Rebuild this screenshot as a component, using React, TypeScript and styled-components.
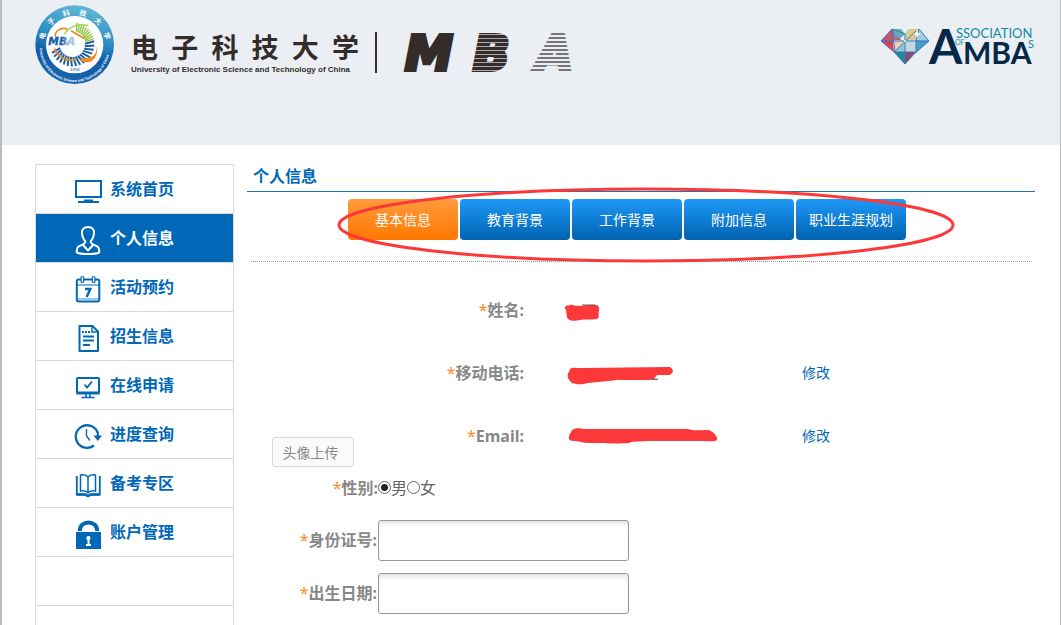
import React from 'react';
import styled, { createGlobalStyle, css } from 'styled-components';

const BLUE = '#0068b7';
const INK = '#342c2a';
const MARK = '#fd3838';

const GlobalStyle = createGlobalStyle`
  *, *::before, *::after { box-sizing: border-box; }
  body {
    margin: 0;
    background: #fff;
    color: #666;
    font-family: "Noto Sans", "Noto Sans CJK SC", sans-serif;
    font-size: 16px;
    line-height: 24px;
  }
`;

const Page = styled.div`
  display: flex;
  flex-direction: column;
  min-height: 100vh;
  border-left: 2px solid #bdbdbd;
  border-right: 1px solid #bdbdbd;
`;

/* ---------- header ---------- */

const Header = styled.header`
  display: flex;
  align-items: flex-start;
  justify-content: space-between;
  height: 145px;
  padding: 5px 24px 0 33px;
  background: #ebeff4;
`;

const Brand = styled.div`
  display: flex;
  align-items: flex-start;
`;

const University = styled.div`
  width: 228px;
  margin: 25px 0 0 16px;
  color: ${INK};
`;

const UniversityName = styled.div`
  display: flex;
  justify-content: space-between;
  font: 700 27px/34px "Noto Sans CJK SC", sans-serif;
`;

const UniversityEnglish = styled.div`
  font: 700 8px/12px "Liberation Sans", sans-serif;
  white-space: nowrap;
`;

const Divider = styled.span`
  width: 2px;
  height: 41px;
  margin: 27px 16px 0;
  background: ${INK};
`;

const MbaMark = styled.svg`
  display: block;
  margin-top: 12px;
`;

const AmbaMark = styled.svg`
  display: block;
  margin-top: 20px;
  overflow: visible;
`;

function ticks(from: number, to: number, step: number, inner: number, outer: number) {
  const lines: string[] = [];
  for (let a = from; a <= to; a += step) {
    const r = (a * Math.PI) / 180;
    const q = ((a + 6) * Math.PI) / 180;
    lines.push(
      `M${(112 + inner * Math.cos(q)).toFixed(1)} ${(118 + inner * Math.sin(q)).toFixed(1)}` +
        `L${(112 + outer * Math.cos(r)).toFixed(1)} ${(118 + outer * Math.sin(r)).toFixed(1)}`,
    );
  }
  return lines.join('');
}

function Seal() {
  return (
    <svg width="80" height="80" viewBox="0 0 240 240" role="img" aria-label="UESTC MBA">
      <defs>
        <linearGradient id="ring" x1="0.6" y1="0" x2="0.4" y2="1">
          <stop offset="0" stopColor="#62b8d6" />
          <stop offset="0.4" stopColor="#2f8fc4" />
          <stop offset="0.65" stopColor="#0f5ba8" />
          <stop offset="1" stopColor="#1a66b0" />
        </linearGradient>
        <linearGradient id="sealMba" x1="0" x2="1">
          <stop offset="0.5" stopColor="#1761ab" />
          <stop offset="0.8" stopColor="#a9c6e2" />
        </linearGradient>
        <path id="sealTop" d="M27 108 A93 93 0 0 1 211 108" />
        <path id="sealBottom" d="M14 126 A105 105 0 0 0 224 126" />
      </defs>
      <circle cx="119" cy="119" r="118" fill="url(#ring)" />
      <circle cx="119" cy="119" r="86" fill="#fff" />
      <g fill="#fff" fontFamily='"Noto Sans CJK SC", sans-serif' fontWeight="700" fontSize="21">
        {['电', '子', '科', '技', '大', '学'].map((c, i) => (
          <text key={c} textAnchor="middle">
            <textPath href="#sealTop" startOffset={`${5 + i * 18}%`}>{c}</textPath>
          </text>
        ))}
      </g>
      <text fill="#fff" fontFamily='"Liberation Sans", sans-serif' fontWeight="700" fontSize="11">
        <textPath href="#sealBottom" startOffset="1%">
          University of Electronic Science and Technology of China
        </textPath>
      </text>
      <path d={ticks(282, 345, 7, 40, 66)} stroke="#8cc63f" strokeWidth="4" />
      <path d={ticks(-8, 165, 11, 38, 66)} stroke="#1c5fa9" strokeWidth="6" />
      <path d="M88 88C102 64 132 54 160 62" fill="none" stroke="#a5d05a" strokeWidth="4" />
      <path d="M62 98C56 78 78 66 96 72M110 78L146 100M60 132C64 152 92 170 122 164" fill="none" stroke="#ef8a23" strokeWidth="5" strokeLinecap="round" />
      <path d="M181 120C190 144 178 158 148 160C128 162 132 172 160 172C184 168 192 136 181 120Z" fill="#f08a1c" />
      <path d="M44 98H140L133 122H40Z" fill="#fff" opacity="0.8" />
      <text x="40" y="119" fill="url(#sealMba)" fontFamily='"DejaVu Sans", sans-serif' fontStyle="italic" fontWeight="700" fontSize="32" stroke="url(#sealMba)" strokeWidth="1">
        MBA
      </text>
      <text x="119" y="198" textAnchor="middle" fill="#2f7fb8" fontFamily='"Liberation Serif", serif' fontStyle="italic" fontWeight="700" fontSize="15">
        1956
      </text>
    </svg>
  );
}

function MbaLogo() {
  return (
    <MbaMark width="200" height="72" viewBox="0 0 200 72" role="img" aria-label="MBA">
      <defs>
        <pattern id="denseStripes" width="8" height="4" patternUnits="userSpaceOnUse">
          <rect width="8" height="4" fill={INK} />
          <rect width="8" height="1" y="1" fill="#aaa9ac" />
        </pattern>
        <pattern id="looseStripes" width="8" height="4" patternUnits="userSpaceOnUse">
          <rect width="8" height="2" fill="#77747a" />
        </pattern>
      </defs>
      <g fontFamily='"DejaVu Sans", sans-serif' fontStyle="italic" fontWeight="700" fontSize="48">
        <text x="12" y="53" fill={INK} stroke={INK} strokeWidth="4">M</text>
        <text x="80" y="53" fill="url(#denseStripes)" stroke="url(#denseStripes)" strokeWidth="4">B</text>
        <text x="143" y="53" fill="url(#looseStripes)" stroke="url(#looseStripes)" strokeWidth="4">A</text>
      </g>
    </MbaMark>
  );
}

function AmbaLogo() {
  return (
    <AmbaMark width="156" height="44" viewBox="0 0 156 44" role="img" aria-label="Association of MBAs">
      <path d="M1 16L12 4L21 15L12 16Z" fill="#c9556b" />
      <path d="M12 4L24 9L15 15Z" fill="#7e8db8" />
      <path d="M12 4H21L25 9L20 14Z" fill="#62b3b4" />
      <path d="M25 9L28 4H39L35 15H25Z" fill="#d8c98f" />
      <path d="M39 4L49 16L36 15Z" fill="#9ed0dc" />
      <path d="M1 16H13L14 27Z" fill="#d8405a" />
      <path d="M13 15H25L14 27Z" fill="#e9d2b8" />
      <path d="M25 15H36V27H25Z" fill="#bfd9de" />
      <path d="M36 15L49 16L36 28Z" fill="#4a9ec5" />
      <path d="M14 27L25 16V27Z" fill="#8fc3cf" />
      <path d="M14 27H25V39Z" fill="#1c8a92" />
      <path d="M25 27H36L25 39Z" fill="#8b4a6c" />
      <path d="M1 16H49M12 4L15 27M39 4L36 15V27L25 39L14 27L1 16L12 4L25 9V39M14 27H36M14 27L36 6M39 4L49 16L36 27" fill="none" stroke="#3d78c0" strokeWidth="1" />
      <circle cx="25" cy="16" r="1" fill="#fff" />
      <path d="M37 5L38 8L41 9L38 10L37 13L36 10L33 9L36 8Z" fill="#fff" />
      <g fontFamily="Lato, sans-serif">
        <text x="49" y="39" fill="#06294a" fontWeight="700" fontSize="48">A</text>
        <text x="83" y="39" fill="#06294a" fontWeight="700" fontSize="30">MBA</text>
        <text x="76" y="13" fill="#168a9e" fontSize="13">SSOCIATION</text>
        <text x="75" y="20" fill="#168a9e" fontSize="7">OF</text>
        <text x="148" y="23" fill="#168a9e" fontSize="11">S</text>
      </g>
    </AmbaMark>
  );
}

/* ---------- sidebar ---------- */

const Body = styled.div`
  display: flex;
  flex: 1;
  gap: 13px;
  padding: 19px 25px 0 33px;
`;

const Sidebar = styled.nav`
  display: flex;
  flex-direction: column;
  flex: 0 0 199px;
  border: 1px solid #d9d9d9;
  border-bottom: 0;
`;

const sidebarCell = css`
  height: 49px;
  border-bottom: 1px solid #d9d9d9;
`;

const SidebarLink = styled.a<{ $active?: boolean }>`
  ${sidebarCell}
  display: flex;
  align-items: center;
  gap: 8px;
  padding-left: 38px;
  font-weight: 700;
  text-decoration: none;
  color: ${(p) => (p.$active ? '#fff' : BLUE)};
  background: ${(p) => (p.$active ? BLUE : '#fff')};
`;

const SidebarBlank = styled.div`
  ${sidebarCell}
`;

const MenuIcon = styled.svg`
  flex: none;
  width: 28px;
  height: 32px;
  margin-top: 4px;
  fill: none;
  stroke: currentColor;
  stroke-width: 2;
`;

const menu: { label: string; active?: boolean; icon: React.ReactNode }[] = [
  {
    label: '系统首页',
    icon: (
      <>
        <rect x="2" y="6" width="25" height="16" />
        <path d="M1 22H28" />
        <path d="M10 25.500H19M4 27H25" />
      </>
    ),
  },
  {
    label: '个人信息',
    active: true,
    icon: (
      <g strokeLinejoin="round" strokeLinecap="round">
        <path d="M14 3C9.500 3 7.500 6 8 9.500C8.300 12.500 9.500 15.500 11.300 17.200C11.600 20 8.500 21 5.500 22C3 23 2.500 25 2.800 28.500C7 30.600 21 30.600 25.200 28.500C25.500 25 25 23 22.500 22C19.500 21 16.400 20 16.700 17.200C18.500 15.500 19.700 12.500 20 9.500C20.500 6 18.500 3 14 3Z" />
        <path d="M9.500 21.500L14 26.500L18.500 21.500" />
      </g>
    ),
  },
  {
    label: '活动预约',
    icon: (
      <>
        <rect x="2.800" y="6.500" width="22.500" height="22" rx="2" />
        <path d="M3 12H25" strokeWidth="1" />
        <path d="M4 26H24" strokeWidth="1.500" opacity="0.5" />
        <rect x="7" y="3.500" width="2.600" height="6" rx="1.300" fill="#fff" strokeWidth="1.200" />
        <rect x="18.400" y="3.500" width="2.600" height="6" rx="1.300" fill="#fff" strokeWidth="1.200" />
        <path d="M11 16H16.300L12.700 24" strokeWidth="2.400" />
      </>
    ),
  },
  {
    label: '招生信息',
    icon: (
      <>
        <path d="M5.500 4H18.500L24 9.500V29H5.500Z" strokeLinejoin="round" />
        <path d="M18 4V10H24" strokeWidth="1.400" />
        <path d="M8 10H16" strokeDasharray="2 1" />
        <path d="M9 14.500H20M9 18.500H20M9 23H16" />
      </>
    ),
  },
  {
    label: '在线申请',
    icon: (
      <>
        <rect x="3" y="7" width="22" height="15" rx="1" />
        <path d="M2.500 22H25.500" strokeWidth="3" />
        <path d="M10.500 13.500L13 16.500L18 10.500" strokeWidth="1.800" />
        <path d="M12 23V26M16 23V26M7.500 26.500H20.500" strokeWidth="1.500" />
      </>
    ),
  },
  {
    label: '进度查询',
    icon: (
      <>
        <path d="M23.600 12.500A11.300 11.300 0 1 0 20 25.500" strokeWidth="2.300" />
        <path d="M12.500 9V16L16 20.500" strokeWidth="1.400" />
        <path d="M23.800 12V17" />
        <path d="M19.500 15.500H28L23.800 21Z" fill="currentColor" stroke="none" />
      </>
    ),
  },
  {
    label: '备考专区',
    icon: (
      <>
        <path d="M14 8C12 5.500 9 5.500 6.500 6V22C9 21.500 12 21.500 14 24C16 21.500 19 21.500 21.500 22V6C19 5.500 16 5.500 14 8Z" strokeWidth="1.500" />
        <path d="M14 8V23" strokeWidth="1.500" />
        <path d="M2.800 7V25.500H10.500L14 27L17.500 25.500H25.800V7" strokeWidth="1.800" />
        <path d="M3 25.500H11L14 27L17 25.500H25.500" strokeWidth="2.500" />
      </>
    ),
  },
  {
    label: '账户管理',
    icon: (
      <>
        <path d="M5.800 13C5.800 1.500 23.200 1.500 23.200 13" strokeWidth="4" />
        <path d="M2 14H27V31H2Z" fill="currentColor" stroke="none" />
        <path d="M14.500 18.500V26.500M12 27H17M12.500 20.500H15" stroke="#fff" strokeWidth="2" />
        <circle cx="14.500" cy="20" r="2" fill="#fff" stroke="none" />
      </>
    ),
  },
];

/* ---------- main column ---------- */

const Main = styled.main`
  position: relative;
  flex: 1;
  min-width: 0;
`;

const Title = styled.h1`
  margin: 0;
  padding: 0 6px 3px;
  border-bottom: 1px solid #1a73b4;
  color: ${BLUE};
  font-size: 16px;
  line-height: 24px;
`;

const Tabs = styled.div`
  display: flex;
  gap: 2px;
  margin: 0 3px 0 4px;
  padding: 7px 0 21px 97px;
  border-bottom: 1px dotted #999;
`;

const Tab = styled.button<{ $active?: boolean }>`
  width: 110px;
  height: 41px;
  padding: 0 0 2px;
  border: 0;
  border-radius: 4px;
  color: #fff;
  font: 400 14px/20px "Noto Sans CJK SC", sans-serif;
  background: ${(p) =>
    p.$active
      ? 'linear-gradient(#ff9a3c, #ff7800)'
      : 'linear-gradient(#1f99f6, #0062b1)'};
`;

const HandCircle = styled.svg`
  position: absolute;
  left: 89px;
  top: 22px;
  pointer-events: none;
`;

const Profile = styled.section`
  display: grid;
  grid-template-columns: 107px 1fr;
  align-items: end;
  margin-top: 16px;
  padding-left: 25px;
`;

const UploadButton = styled.button`
  width: 82px;
  height: 30px;
  padding: 0 5px 0 0;
  border: 1px solid #d9d9d9;
  border-radius: 3px;
  background: #fafafa;
  color: #888;
  font: 400 14px/20px "Noto Sans CJK SC", sans-serif;
`;

const FactRow = styled.div`
  display: grid;
  grid-template-columns: 145px 192px 1fr;
  column-gap: 43px;
  align-items: center;
  height: 63px;
`;

const Caption = styled.span`
  color: #888;
  font-weight: 700;
  text-align: right;
  white-space: nowrap;

  &::before {
    content: '*';
    color: #ff8a2a;
    font-weight: 400;
  }
`;

const EditLink = styled.a`
  color: ${BLUE};
  font-size: 14px;
  text-decoration: none;
`;

const Scribble = styled.svg`
  display: block;
  fill: ${MARK};
`;

const Field = styled.div`
  display: grid;
  grid-template-columns: 131px 251px;
  align-items: center;
  min-height: 41px;
  margin-bottom: 12px;
`;

const FieldLabel = styled(Caption).attrs({ as: 'label' })<{ htmlFor?: string }>`
  padding: 0 1px 2px 0;
`;

const TextInput = styled.input`
  width: 100%;
  height: 41px;
  padding: 0 8px;
  border: 1px solid #999;
  border-radius: 3px;
  background: #fff;
  box-shadow: inset 0 4px 4px -1px #e4e4e4;
  font: inherit;
`;

const RadioGroup = styled.div`
  display: flex;
  align-items: center;
`;

const RadioLabel = styled.label`
  display: flex;
  align-items: center;
`;

const Radio = styled.input`
  appearance: none;
  width: 13px;
  height: 13px;
  margin: 0;
  border: 1px solid #666;
  border-radius: 50%;
  background: #fff;

  &:checked {
    background: radial-gradient(circle, #222 0 3px, #fff 4px);
  }
`;

export default function App() {
  return (
    <>
      <GlobalStyle />
      <Page>
        <Header>
          <Brand>
            <Seal />
            <University>
              <UniversityName>
                {['电', '子', '科', '技', '大', '学'].map((c) => (
                  <span key={c}>{c}</span>
                ))}
              </UniversityName>
              <UniversityEnglish>
                University of Electronic Science and Technology of China
              </UniversityEnglish>
            </University>
            <Divider />
            <MbaLogo />
          </Brand>
          <AmbaLogo />
        </Header>
        <Body>
          <Sidebar>
            {menu.map((item) => (
              <SidebarLink key={item.label} href="#" $active={item.active}>
                <MenuIcon viewBox="0 0 28 32" aria-hidden="true">{item.icon}</MenuIcon>
                {item.label}
              </SidebarLink>
            ))}
            <SidebarBlank />
          </Sidebar>
          <Main>
            <Title>个人信息</Title>
            <Tabs>
              <Tab type="button" $active>基本信息</Tab>
              <Tab type="button">教育背景</Tab>
              <Tab type="button">工作背景</Tab>
              <Tab type="button">附加信息</Tab>
              <Tab type="button">职业生涯规划</Tab>
            </Tabs>
            <HandCircle width="620" height="78" viewBox="0 0 620 78" aria-hidden="true">
              <ellipse cx="310" cy="39" rx="307" ry="36" fill="none" stroke={MARK} strokeWidth="3" />
            </HandCircle>
            <Profile>
              <UploadButton type="button">头像上传</UploadButton>
              <div>
                <FactRow>
                  <Caption>姓名:</Caption>
                  <Scribble width="36" height="24" viewBox="2 -6 36 24" overflow="visible" aria-hidden="true">
                    <path d="M0 3C1 1 4 2 6 0.500C9 2 12 1.500 16 2C22 0.500 28 1 32 1C35 3 34 6 33.500 9C34 12 34 15 31 15C26 16 20 15 15 16C9 17.500 3 17 2 13C1 9 2 6 0 5Z" />
                    <path d="M17 0.500H30V1.500H17Z" fill="#665555" />
                  </Scribble>
                </FactRow>
                <FactRow>
                  <Caption>移动电话:</Caption>
                  <Scribble width="108" height="24" viewBox="0 -5 108 24" aria-hidden="true">
                    <path d="M3 3C5 1 10 2 15 2L103 1C107 3 107 8 102 9H90C88 12 86 14 82 14H54C49 13 46 15 42 15C34 16 28 16 21 17C14 19 5 19 3 15C0 12 0 8 2 6Z" />
                    <path d="M86 12L91 13V14H84Z" fill="#78666a" />
                  </Scribble>
                  <EditLink href="#">修改</EditLink>
                </FactRow>
                <FactRow>
                  <Caption>Email:</Caption>
                  <Scribble width="152" height="18" viewBox="0 0 152 18" aria-hidden="true">
                    <path d="M5 3C8 1 13 1 17 2H121C126 4 133 3 142 3C147 5 151 10 150 13C148 15 142 14 134 14H80C70 15 65 14 62 16C50 17 30 16 22 16C16 16 11 14 8 14C4 14 1 13 2 10C2 7 4 6 5 3Z" />
                  </Scribble>
                  <EditLink href="#">修改</EditLink>
                </FactRow>
              </div>
            </Profile>
            <Field>
              <Caption id="gender">性别:</Caption>
              <RadioGroup role="radiogroup" aria-labelledby="gender">
                <RadioLabel>
                  <Radio type="radio" name="gender" defaultChecked />男
                </RadioLabel>
                <RadioLabel>
                  <Radio type="radio" name="gender" />女
                </RadioLabel>
              </RadioGroup>
            </Field>
            <Field>
              <FieldLabel htmlFor="id-number">身份证号:</FieldLabel>
              <TextInput id="id-number" type="text" />
            </Field>
            <Field>
              <FieldLabel htmlFor="birthday">出生日期:</FieldLabel>
              <TextInput id="birthday" type="text" />
            </Field>
          </Main>
        </Body>
      </Page>
    </>
  );
}
